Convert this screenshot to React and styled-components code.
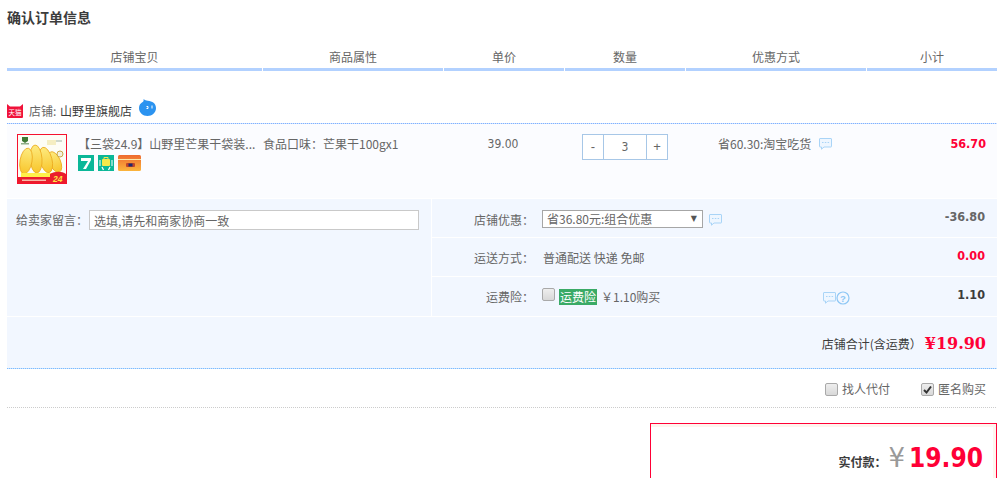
import React from "react";
import styled, { createGlobalStyle } from "styled-components";

const Global = createGlobalStyle`
  html, body { margin: 0; padding: 0; background: #fff; height: 478px; overflow: hidden; }
  body { font: 12px/18px "Noto Sans CJK SC", "Liberation Sans", sans-serif; color: #666; }
  * { box-sizing: border-box; }
`;
const Page = styled.div`width: 1004px; padding: 0 7px; height: 478px; overflow: hidden;`;
const Title = styled.h1`margin: 0; height: 34px; padding-top: 8px; font-size: 14px; line-height: 18px; font-weight: 700; color: #3c3c3c;`;
const HeadRow = styled.div`display: flex; gap: 1px; width: 990px; height: 37px;`;
const HeadCell = styled.div`
  width: ${p => p.$w}px; flex: none; height: 37px; padding-top: 14px; text-align: center; line-height: 18px;
  border-bottom: 3px solid #b2d1ff; color: #666;
`;
const dots = (c, gap = "transparent") => `background-image: repeating-linear-gradient(90deg, ${c} 0 1px, ${gap} 1px 2px); background-size: 100% 1px; background-position: left bottom; background-repeat: no-repeat;`;
const ShopRow = styled.div`
  display: flex; align-items: center; width: 990px; height: 53px; padding: 27px 0 1px;
  ${dots("#80b2ff", "#cfe1ff")} color: #666;
`;
const ShopName = styled.span`color: #3c3c3c; margin-left: 1px;`;
const ShopLabel = styled.span`margin-left: 6px;`;
const ChatIcon = styled.svg`margin: -6px 0 0 7px; flex: none;`;
const ItemRow = styled.div`display: flex; width: 990px; height: 74px; background: #fbfcff;`;
const Thumb = styled.svg`flex: none; margin: 10px 11px 0 10px;`;
const ItemInfo = styled.div`width: 184px; flex: none; padding-top: 10px;`;
const ItemName = styled.div`white-space: nowrap; line-height: 20px;`;
const Badges = styled.div`display: flex; gap: 4px; margin-top: 1px;`;
const Attr = styled.div`width: 181px; flex: none; padding: 11px 0 0 1px; line-height: 18px; white-space: nowrap;`;
const Price = styled.div`width: 120px; flex: none; padding-top: 11px; text-align: center; font: 12px/18px "DejaVu Sans Condensed", "DejaVu Sans", sans-serif;`;
const QtyCell = styled.div`width: 121px; flex: none; padding: 10px 0 0 19px;`;
const Qty = styled.div`display: flex; width: 86px; height: 26px; border: 1px solid #a7c7e7; background: #fff;`;
const QtyBtn = styled.div`width: 20px; flex: none; text-align: center; line-height: 24px; font-size: 13px; font-family: "Liberation Sans", sans-serif;`;
const QtyVal = styled.div`flex: 1; text-align: center; border-left: 1px solid #a7c7e7; border-right: 1px solid #a7c7e7; font: 12px/24px "DejaVu Sans Condensed", "DejaVu Sans", sans-serif;`;
const Promo = styled.div`display: flex; align-items: flex-start; width: 180px; flex: none; padding: 11px 0 0 34px; white-space: nowrap;`;
const BubbleWrap = styled.span`flex: none; display: block; margin: ${p => p.$m};`;
const Help = styled.svg`flex: none; display: block; margin-top: 3px;`;
const amountFont = `font: 700 12.5px/18px "DejaVu Sans Condensed", "DejaVu Sans", sans-serif;`;
const Sub = styled.div`flex: 1; padding: 11px 11px 0 0; text-align: right; ${amountFont} color: #ff0036;`;

const Info = styled.div`display: flex; width: 990px; height: 117px; margin-top: 1px; gap: 1px;`;
const Message = styled.div`display: flex; align-items: flex-start; width: 424px; flex: none; background: #f2f7ff; padding: 11px 0 0 9px;`;
const MsgLabel = styled.span`line-height: 20px; width: 73px; flex: none;`;
const MsgInput = styled.div`width: 330px; height: 20px; border: 1px solid #c9c9c9; background: #fff; padding-left: 4px; line-height: 19px;`;
const Options = styled.div`display: grid; grid-template-rows: 38px 38px 39px; gap: 1px; flex: 1;`;
const OptRow = styled.div`display: flex; background: #f2f7ff;`;
const OptLabel = styled.div`width: 102px; flex: none; text-align: right; padding-top: ${p => p.$pt}px; line-height: 18px;`;
const OptBody = styled.div`display: flex; align-items: flex-start; width: 271px; flex: none; padding: ${p => p.$pt}px 0 0 ${p => p.$pl || 8}px; line-height: 18px; white-space: nowrap;`;
const Select = styled.div`
  display: flex; justify-content: space-between; width: 161px; height: 18px; flex: none; border: 1px solid #a6a6a6; background: #fff;
  padding: 0 5px 0 4px; line-height: 16px; margin-top: -1px;
`;
const Caret = styled.span`font-size: 8px; color: #555; line-height: 15px; font-family: "DejaVu Sans", sans-serif;`;
const Amount = styled.div`flex: 1; text-align: right; padding: 9px 12px 0 0; ${amountFont} color: ${p => p.$c};`;
const Check = styled.span`
  display: inline-block; width: 13px; height: 13px; flex: none; border: 1px solid #a9a9a9; border-radius: 2px;
  background: linear-gradient(#eee, #d8d8d8);
`;
const InsTag = styled.span`margin: 1px 0 0 4px; background: #3aaa66; color: #fff; height: 16px; line-height: 15px; padding: 0 1px;`;
const InsPrice = styled.span`margin-left: 4px;`;
const TotalRow = styled.div`
  display: flex; justify-content: flex-end; align-items: center; gap: 3px; width: 990px; height: 52px; margin-top: 1px; padding: 2px 11px 1px 0;
  background-color: #f2f7ff; ${dots("#7dbcff", "#c8e2ff")} color: #3c3c3c;
`;
const TotalPrice = styled.span`font: 700 16px/20px "DejaVu Serif", "Liberation Serif", serif; color: #ff0036;`;
const ExtraRow = styled.div`
  display: flex; justify-content: flex-end; align-items: center; width: 990px; height: 39px; padding: 2px 11px 1px 0;
  ${dots("#ccc")}
`;
const Extra = styled.div`display: flex; align-items: center; gap: 4px; margin-left: ${p => p.$ml || 0}px;`;
const PayRow = styled.div`display: flex; justify-content: flex-end; width: 990px; margin-top: 15px;`;
const PayBox = styled.div`
  display: flex; justify-content: flex-end; align-items: baseline; width: 347px; height: 100px; padding: 19px 13px 0 0;
  border: 1px solid #ff0036; box-shadow: inset -3px 3px 0 #fff4ee;
`;
const PayLabel = styled.span`font-weight: 700; color: #3c3c3c; font-size: 12px;`;
const Yen = styled.span`font: 400 26px/30px "DejaVu Sans", sans-serif; color: #999; margin: 0 4px 0 2px;`;
const PayNum = styled.span`font: 700 26px/30px "DejaVu Sans Condensed", "DejaVu Sans", sans-serif; color: #ff0036;`;

const BubbleIcon = () => (
  <svg width="13" height="12" viewBox="0 0 13 12" style={{display:"block"}}>
    <path d="M1 .5h11a.5.5 0 0 1 .5.5v7.5a.5.5 0 0 1-.5.5H5L2.500 11.200V9H1a.5.5 0 0 1-.5-.5V1A.5.5 0 0 1 1 .5z" fill="#eef6ff" stroke="#a9d4f7"/>
    <path d="M3 4.500h1.500M5.800 4.500h1.500M8.600 4.500h1.500" stroke="#a9d4f7"/>
  </svg>
);

export default function App() {
  const cols = [["店铺宝贝",255],["商品属性",180],["单价",120],["数量",120],["优惠方式",180],["小计",130]];
  return (
    <Page>
      <Global />
      <Title>确认订单信息</Title>
      <HeadRow>{cols.map(([t,w]) => <HeadCell key={t} $w={w}>{t}</HeadCell>)}</HeadRow>
      <ShopRow>
        <svg width="16" height="14" viewBox="0 0 16 14" style={{flex:"none"}}>
          <path d="M0 0l3 2.500h10L16 0v13a1 1 0 0 1-1 1H1a1 1 0 0 1-1-1z" fill="#f0123a"/>
          <text x="8" y="11" textAnchor="middle" fontSize="6.5" fill="#fff" fontFamily="Noto Sans CJK SC">天猫</text>
        </svg>
        <ShopLabel>店铺:</ShopLabel><ShopName>&nbsp;山野里旗舰店</ShopName>
        <ChatIcon width="17" height="17" viewBox="0 0 17 17">
          <path d="M4.500 0C6 1 7 1.500 8.800 1.700 13.300 2 17 4.500 17 9c0 4.500-3.800 8-8.500 8S0 13.500 0 9c0-2.800 1.500-4.800 4-6.200C4.600 2 4.800 1 4.500 0z" fill="#2b93f0"/>
          <path d="M7.500 7.500h1.500v2H7.500M13 6.500v3" stroke="#fff" strokeWidth="1" fill="none"/>
        </ChatIcon>
      </ShopRow>
      <ItemRow>
        <Thumb width="50" height="50" viewBox="0 0 50 50">
          <defs>
            <linearGradient id="mango" x1="0" y1="0" x2="0" y2="1">
              <stop offset="0" stopColor="#fdeb80"/><stop offset="1" stopColor="#f8c52a"/>
            </linearGradient>
          </defs>
          <rect width="50" height="50" fill="#fdfdf6"/>
          <g stroke="#eba91c" strokeWidth="0.800">
            <ellipse cx="38" cy="28" rx="5.500" ry="11" fill="url(#mango)" transform="rotate(-24 38 28)"/>
            <ellipse cx="29" cy="26" rx="6" ry="13" fill="url(#mango)" transform="rotate(-14 29 26)"/>
            <ellipse cx="19" cy="25" rx="6" ry="14" fill="url(#mango)" transform="rotate(-4 19 25)"/>
            <ellipse cx="9" cy="27" rx="6" ry="13" fill="url(#mango)" transform="rotate(10 9 27)"/>
          </g>
          <path d="M5 3h6v4l-3 2-3-2z" fill="#3f7a34"/>
          <rect x="4" y="9" width="8" height="1.500" fill="#8fae88"/>
          <rect x="30" y="6" width="9" height="5" fill="#f5eec2"/>
          <rect x="39" y="6" width="6" height="2" fill="#cfd8cc"/>
          <circle cx="43" cy="20" r="3" fill="#f3f1de" stroke="#c9a94a"/>
          <rect x="4" y="39" width="31" height="4" fill="#fff04a"/>
          <rect x="1" y="43" width="48" height="6" fill="#ea1c2c"/>
          <path d="M33 40c5-3 12-3 16 0v10H33z" fill="#ea1c2c"/>
          <rect x="5" y="45.500" width="24" height="1.500" fill="#f8b8a8"/>
          <text x="36" y="48" fontSize="8.500" fontWeight="700" fontStyle="italic" fill="#ffe23f" fontFamily="Liberation Sans">24</text>
          <rect x=".5" y=".5" width="49" height="49" fill="none" stroke="#f5122f"/>
        </Thumb>
        <ItemInfo>
          <ItemName>【三袋24.9】山野里芒果干袋装...</ItemName>
          <Badges>
            <svg width="16" height="16" viewBox="0 0 16 16"><rect width="16" height="16" fill="#0bb798"/><path d="M3 3h10v2L8 14H5l5-8H3z" fill="#fff"/></svg>
            <svg width="16" height="16" viewBox="0 0 16 16"><rect width="16" height="16" fill="#0bb798"/><rect x="4" y="4" width="8" height="7" rx="1" fill="#f7e94b"/><path d="M6 4V2.500h4V4" stroke="#f7e94b" fill="none"/><path d="M4 12l1.500 3M12 12l-1.500 3" stroke="#fff" strokeWidth="1.300"/><path d="M2 5v6M14 5v6" stroke="#fff"/></svg>
            <svg width="23" height="16" viewBox="0 0 23 16">
              <defs><linearGradient id="card" x1="0" y1="0" x2="0" y2="1"><stop offset="0" stopColor="#ee6a30"/><stop offset="1" stopColor="#fbb53c"/></linearGradient></defs>
              <rect width="23" height="16" rx="1.500" fill="url(#card)"/>
              <rect y="4" width="23" height="1" fill="#fde6a8"/>
              <rect x="8" y="8" width="9" height="4" rx="1" fill="#c1442b"/>
              <rect x="10.500" y="8.500" width="4" height="3" fill="#1e2b70"/>
            </svg>
          </Badges>
        </ItemInfo>
        <Attr>食品口味：芒果干100gx1</Attr>
        <Price>39.00</Price>
        <QtyCell>
          <Qty><QtyBtn>-</QtyBtn><QtyVal>3</QtyVal><QtyBtn>+</QtyBtn></Qty>
        </QtyCell>
        <Promo>省60.30:淘宝吃货<BubbleWrap $m="3px 0 0 8px"><BubbleIcon /></BubbleWrap></Promo>
        <Sub>56.70</Sub>
      </ItemRow>
      <Info>
        <Message>
          <MsgLabel>给卖家留言：</MsgLabel>
          <MsgInput>选填,请先和商家协商一致</MsgInput>
        </Message>
        <Options>
          <OptRow>
            <OptLabel $pt={12}>店铺优惠：</OptLabel>
            <OptBody $pt={12}>
              <Select>省36.80元:组合优惠<Caret>▼</Caret></Select>
              <BubbleWrap $m="3px 0 0 6px"><BubbleIcon /></BubbleWrap>
            </OptBody>
            <Amount $c="#666">-36.80</Amount>
          </OptRow>
          <OptRow>
            <OptLabel $pt={11}>运送方式：</OptLabel>
            <OptBody $pt={11} $pl={9}>普通配送 快递 免邮</OptBody>
            <Amount $c="#ff0036">0.00</Amount>
          </OptRow>
          <OptRow>
            <OptLabel $pt={11}>运费险：</OptLabel>
            <OptBody $pt={11}>
              <Check />
              <InsTag>运费险</InsTag>
              <InsPrice>￥1.10购买</InsPrice>
              <BubbleWrap $m="4px 0 0 163px"><BubbleIcon /></BubbleWrap>
              <Help width="14" height="14" viewBox="0 0 14 14">
                <circle cx="7" cy="7" r="6" fill="none" stroke="#8ec7f5" strokeWidth="1.200"/>
                <text x="7" y="10.500" textAnchor="middle" fontSize="9.500" fontWeight="700" fill="#8ec7f5" fontFamily="Liberation Sans">?</text>
              </Help>
            </OptBody>
            <Amount $c="#3c3c3c">1.10</Amount>
          </OptRow>
        </Options>
      </Info>
      <TotalRow>店铺合计(含运费）<TotalPrice>¥19.90</TotalPrice></TotalRow>
      <ExtraRow>
        <Extra><Check />找人代付</Extra>
        <Extra $ml={31}>
          <Check>
            <svg width="11" height="11" viewBox="0 0 11 11" style={{display:"block"}}><path d="M2 6l2.500 2.500L9 2.500" stroke="#333" strokeWidth="2" fill="none"/></svg>
          </Check>
          匿名购买
        </Extra>
      </ExtraRow>
      <PayRow>
        <PayBox>
          <PayLabel>实付款：</PayLabel>
          <Yen>¥</Yen>
          <PayNum>19.90</PayNum>
        </PayBox>
      </PayRow>
    </Page>
  );
}
